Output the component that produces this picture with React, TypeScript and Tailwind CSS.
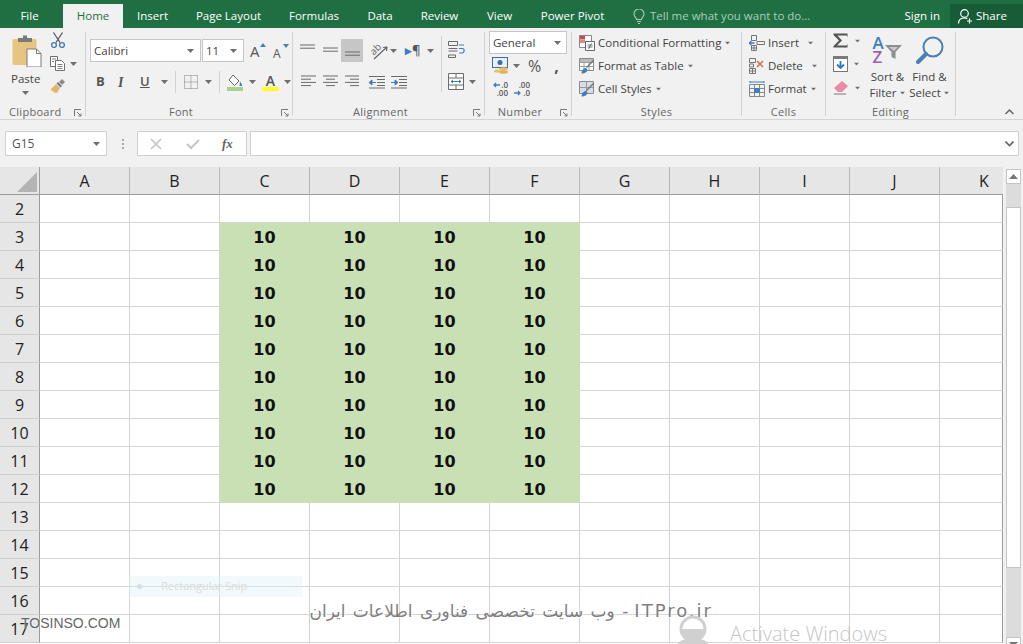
import React from 'react';

const UI = "font-['Open_Sans','Noto_Sans',sans-serif]";
const COLS = ['A', 'B', 'C', 'D', 'E', 'F', 'G', 'H', 'I', 'J', 'K'];
const ROWS = [2, 3, 4, 5, 6, 7, 8, 9, 10, 11, 12, 13, 14, 15, 16, 17];

const TABS = [
  { label: 'File', w: 'w-[59px] mr-[4px]' },
  { label: 'Home', w: 'w-[60px]', active: true },
  { label: 'Insert', w: 'w-[59px]' },
  { label: 'Page Layout', w: 'w-[93px]' },
  { label: 'Formulas', w: 'w-[78px]' },
  { label: 'Data', w: 'w-[54px]' },
  { label: 'Review', w: 'w-[65px]' },
  { label: 'View', w: 'w-[55px]' },
  { label: 'Power Pivot', w: 'w-[91px]' },
];

function Caret({ className = '' }: { className?: string }) {
  return (
    <svg width="7" height="4" viewBox="0 0 7 4" className={`shrink-0 ${className}`}>
      <path d="M0 0h7L3.5 4z" fill="#6f6f6f" />
    </svg>
  );
}

function Launcher() {
  return (
    <svg width="8" height="8" viewBox="0 0 8 8" className="absolute right-[3px] top-[5px]">
      <path d="M0.5 7V0.5H7M3 3l4 4M7 4.5V7H4.5" fill="none" stroke="#777" strokeWidth="1" />
    </svg>
  );
}

function Lines({ widths, color = '#6a6a6a', size = 15, align = 'left' }: { widths: number[]; color?: string; size?: number; align?: 'left' | 'center' | 'right' }) {
  return (
    <svg width={size} height={widths.length * 3.2 + 1} className="shrink-0">
      {widths.map((w, i) => {
        const x = align === 'left' ? 0 : align === 'center' ? (size - w) / 2 : size - w;
        return <rect key={i} x={x} y={i * 3.2 + 0.5} width={w} height="1" fill={color} />;
      })}
    </svg>
  );
}

function PasteIcon() {
  return (
    <svg width="30" height="32" viewBox="0 0 30 32">
      <rect x="0.5" y="4" width="24" height="26" rx="1" fill="#e8c482" />
      <path d="M6 7V3h5V0.5h4V3h5v4z" fill="#7a7a7a" />
      <path d="M15 14h9.5l4.5 4.5V32H15z" fill="#fff" stroke="#7b7b7b" />
      <path d="M24.5 14v4.5H29" fill="none" stroke="#7b7b7b" />
    </svg>
  );
}

function ScissorsIcon() {
  return (
    <svg width="16" height="16" viewBox="0 0 16 16" fill="none">
      <path d="M3.5 0.5l6.5 10M12.5 0.5L6 10.5" stroke="#5a5a5a" strokeWidth="1.3" />
      <circle cx="4" cy="13" r="2.4" stroke="#4a7db5" strokeWidth="1.4" />
      <circle cx="12" cy="13" r="2.4" stroke="#4a7db5" strokeWidth="1.4" />
    </svg>
  );
}

function CopyIcon() {
  return (
    <svg width="15" height="15" viewBox="0 0 15 15" fill="#fff" stroke="#6f6f6f">
      <path d="M0.5 0.5h7v10h-7z" />
      <path d="M5.5 4.5h6l3 3v7h-9z" />
      <path d="M2 3h4M2 5.5h2M7.5 8.5h5M7.5 10.5h5M7.5 12.5h5" strokeWidth="0.9" />
    </svg>
  );
}

function PainterIcon() {
  return (
    <svg width="16" height="15" viewBox="0 0 16 15">
      <path d="M1 10l5-5 4 4-3 5-3-.5-1-1.500-2-.5z" fill="#e3b566" />
      <path d="M6.500 4.500l4 4 1.500-1.500-4-4z" fill="#777" />
      <path d="M9 3l3-3 3 3-3 3z" fill="#8d8d8d" />
    </svg>
  );
}

function BigA({ up }: { up?: boolean }) {
  return (
    <span className="relative flex h-[16px] w-[14px] items-end text-[#555]">
      <span className={up ? 'text-[15px] leading-[15px]' : 'text-[12px] leading-[13px]'}>A</span>
      <svg width="6" height="4" viewBox="0 0 6 4" className="absolute right-[-2px] top-0">
        <path d={up ? 'M0 4h6L3 0z' : 'M0 0h6L3 4z'} fill="#3f7fbf" />
      </svg>
    </span>
  );
}

function BordersIcon() {
  return (
    <svg width="14" height="14" viewBox="0 0 14 14" fill="none" stroke="#7f7f7f" strokeDasharray="1 1">
      <path d="M0.500 0.500h13v13h-13zM7 0.500v13M0.500 7h13" />
    </svg>
  );
}

function FillIcon() {
  return (
    <svg width="17" height="17" viewBox="0 0 17 17">
      <path d="M6 1l6 6-4.500 4.500-5.500-5.500z" fill="#fff" stroke="#666" />
      <path d="M13 7.500l2 3v1.500h-2.500z" fill="#3f7fbf" />
      <rect x="0" y="13" width="16" height="4" fill="#a9d08e" />
    </svg>
  );
}

function FontColorIcon() {
  return (
    <span className="relative flex h-[18px] w-[17px] justify-center">
      <span className="text-[14px] font-semibold leading-[15px] text-[#555]">A</span>
      <span className="absolute bottom-0 h-[4px] w-[17px] rounded-[1px] bg-[#ffff20]" />
    </span>
  );
}

function OrientIcon() {
  return (
    <span className="relative flex h-[18px] w-[19px] shrink-0">
      <span className="ml-[1px] mt-[-1px] -rotate-45 text-[10px] leading-[14px] text-[#666]">ab</span>
      <svg width="19" height="18" viewBox="0 0 19 18" fill="none" className="absolute left-0 top-0">
        <path d="M4 17L17 5M17 5l-4 0.500M17 5l-0.500 4" stroke="#666" strokeWidth="1.2" />
      </svg>
    </span>
  );
}

function WrapIcon() {
  return (
    <svg width="18" height="17" viewBox="0 0 18 17" fill="none" stroke="#6a6a6a">
      <path d="M0.500 0.500h9v4h-9zM0.500 7.500h9M0.500 10h9M0.500 14h7v2.500h-7z" />
      <path d="M11 4h5M11 12h3c2.500 0 3-4 0.500-4.500H11" stroke="#3f7fbf" strokeWidth="1.200" />
    </svg>
  );
}

function MergeIcon() {
  return (
    <svg width="16" height="17" viewBox="0 0 16 17" fill="#fff" stroke="#6a6a6a">
      <path d="M0.500 0.500h15v16h-15zM0.500 5h15M0.500 12h15M8 0.500V5M8 12v4.500" />
      <path d="M3 8.500h10M3 8.500l2-1.500M3 8.500l2 1.500M13 8.500l-2-1.500M13 8.500l-2 1.500" stroke="#3f7fbf" />
    </svg>
  );
}

function IndentIcon({ flip }: { flip?: boolean }) {
  return (
    <svg width="16" height="14" viewBox="0 0 16 14" fill="none">
      <path d="M0 1.500h16M8 4.500h8M8 7.500h8M8 10.500h8M0 13h16" stroke="#6a6a6a" />
      <path d={flip ? 'M0 7.500h4V5l3 2.500L4 10V7.500' : 'M7 7.500H3V5L0 7.500 3 10V7.500'} fill="#3f7fbf" stroke="#3f7fbf" />
    </svg>
  );
}

function AccountingIcon() {
  return (
    <svg width="17" height="19" viewBox="0 0 17 19">
      <rect x="0.500" y="0.500" width="15" height="10" fill="#e9f0f8" stroke="#3a6ea5" />
      <circle cx="8" cy="5.500" r="2.500" fill="#3a6ea5" />
      <ellipse cx="11.500" cy="12" rx="4.500" ry="1.800" fill="#e8c064" />
      <ellipse cx="11.500" cy="15" rx="4.500" ry="1.800" fill="#e3b44e" />
      <ellipse cx="5" cy="14" rx="3" ry="1.500" fill="#e8c064" />
    </svg>
  );
}

function DecimalIcon({ more }: { more?: boolean }) {
  return (
    <span className="relative block h-[16px] w-[16px] text-[8px] font-semibold leading-[8px] text-[#555]">
      <span className="absolute right-0 top-0">{more ? '.00' : '.0'}</span>
      <span className="absolute bottom-0 right-0">{more ? '.0' : '.00'}</span>
      <svg width="8" height="6" viewBox="0 0 8 6" className={more ? 'absolute bottom-[1px] left-0' : 'absolute left-0 top-[1px]'}>
        <path d={more ? 'M0 3h6M4 1l2 2-2 2' : 'M8 3H2M4 1L2 3l2 2'} fill="none" stroke="#3f7fbf" strokeWidth="1.300" />
      </svg>
    </span>
  );
}

function CondFormatIcon() {
  return (
    <svg width="16" height="16" viewBox="0 0 16 16">
      <path d="M0.500 0.500h12v12h-12z" fill="#fff" stroke="#888" />
      <rect x="1" y="1" width="5" height="3.500" fill="#c0504d" />
      <rect x="1" y="5" width="5" height="3" fill="#d98a88" />
      <path d="M6.500 6.500h9v9h-9z" fill="#fff" stroke="#666" />
      <path d="M8.500 10h5M8.500 12h5M12.500 8.500l-3 5.500" stroke="#555" strokeWidth="0.800" />
    </svg>
  );
}

function TableStyleIcon({ fillCells }: { fillCells?: boolean }) {
  return (
    <svg width="16" height="16" viewBox="0 0 16 16">
      <path d="M0.500 0.500h14v12h-14z" fill={fillCells ? '#d7dee8' : '#fff'} stroke="#8a8a8a" />
      {!fillCells && <path d="M0.500 4.500h14M0.500 8.500h14M5 0.500v12M10 0.500v12" stroke="#9a9a9a" />}
      {!fillCells && <rect x="1" y="1" width="13" height="3" fill="#b9b9b9" />}
      {fillCells && <path d="M0.500 6.500h14M7.500 0.500v12" stroke="#9a9a9a" />}
      <path d="M15 3L8 10l-1-1 7-7z" fill="#777" />
      <path d="M2.500 15.500c0-3 2-5.500 4.500-5.500l1.500 1.500c0 2.500-3 4-6 4z" fill="#3f7fbf" />
    </svg>
  );
}

function InsertCellsIcon() {
  return (
    <svg width="16" height="16" viewBox="0 0 16 16" fill="none" stroke="#777">
      <path d="M2.500 0.500h5v5h-5zM2.500 10.500h5v5h-5zM2.500 13h5M5 10.500v5M8 6.500h7.500v3H8z" />
      <path d="M0 8h5.500M0 8l2.500-2M0 8l2.500 2" stroke="#3f7fbf" strokeWidth="1.300" />
    </svg>
  );
}

function DeleteCellsIcon() {
  return (
    <svg width="16" height="16" viewBox="0 0 16 16" fill="none" stroke="#777">
      <path d="M0.500 0.500h6v4h-6zM0.500 10.500h6v5h-6zM0.500 13h6M3.500 10.500v5M0.500 6h4v3h-4z" />
      <path d="M8 3l6 6M14 3L8 9" stroke="#d9694d" strokeWidth="1.500" />
    </svg>
  );
}

function FormatCellsIcon() {
  return (
    <svg width="16" height="16" viewBox="0 0 16 16" fill="none" stroke="#888">
      <path d="M0.500 3.500h15v12h-15zM0.500 7.500h15M0.500 11.500h15M5.500 3.500v12M10.500 3.500v12" />
      <rect x="5" y="7" width="6" height="5" fill="#3f7fbf" stroke="none" />
      <path d="M1 1h14M1 0v2M15 0v2" stroke="#3f7fbf" />
    </svg>
  );
}

function SigmaIcon() {
  return (
    <svg width="15" height="15" viewBox="0 0 15 15">
      <path d="M0.500 0.500h14v3.500l-1-1.500H4.500L9 7.500 4 12.500h9.500l1-1.500v3.500H0.500v-1.500L6 7.500 0.500 2z" fill="#555" />
    </svg>
  );
}

function FillDownIcon() {
  return (
    <svg width="15" height="16" viewBox="0 0 15 16">
      <rect x="0.500" y="0.500" width="14" height="15" fill="#fff" stroke="#777" />
      <rect x="0" y="0" width="15" height="3" fill="#7a7a7a" />
      <path d="M7.500 5v7M4 8.500l3.500 3.500L11 8.500" fill="none" stroke="#2f77bc" strokeWidth="1.800" />
    </svg>
  );
}

function EraserIcon() {
  return (
    <svg width="16" height="15" viewBox="0 0 16 15">
      <path d="M9 1l6 5-6 6H5L1 8z" fill="#e98ba6" />
      <path d="M1 14h12" stroke="#777" strokeWidth="1" />
    </svg>
  );
}

function SortIcon() {
  return (
    <span className="relative flex h-[28px] w-[30px] flex-col text-[17px] font-semibold leading-[14px]">
      <span className="text-[#3f7fbf]">A</span>
      <span className="text-[#a25cb5]">Z</span>
      <svg width="30" height="28" viewBox="0 0 30 28" className="absolute left-0 top-0">
        <path d="M12 9h17l-6.500 7v7l-4-2v-5z" fill="#8e8e8e" />
        <path d="M16 11h9l-4 4z" fill="#c9c9c9" />
      </svg>
    </span>
  );
}

function FindIcon() {
  return (
    <svg width="28" height="28" viewBox="0 0 28 28" fill="none">
      <circle cx="17" cy="11" r="9.500" stroke="#4a7fb5" strokeWidth="2" />
      <path d="M10 18L2 26" stroke="#4a7fb5" strokeWidth="4" strokeLinecap="round" />
    </svg>
  );
}

function Group({ width, label, launcher, labelClass = 'justify-center', children }: { width: string; label: string; launcher?: boolean; labelClass?: string; children: React.ReactNode }) {
  return (
    <div className={`mt-[4px] flex h-[84px] shrink-0 flex-col border-r border-[#d2d2d2] ${width}`}>
      <div className="h-[72px] shrink-0">{children}</div>
      <div className={`relative flex h-[16px] shrink-0 items-center text-[11px] tracking-[0.3px] text-[#666] ${labelClass}`}>
        {label}
        {launcher && <Launcher />}
      </div>
    </div>
  );
}

function StyleRow({ icon, label, caret = true }: { icon: React.ReactNode; label: string; caret?: boolean }) {
  return (
    <div className="flex h-[23px] items-center">
      <span className="flex w-[19px] shrink-0 items-center">{icon}</span>
      <span className="whitespace-nowrap text-[11.500px] text-[#444]">{label}</span>
      {caret && <Caret className="ml-[3px] scale-75" />}
    </div>
  );
}

function Ribbon() {
  return (
    <div className="flex h-[92px] border-b border-[#d4d4d4] bg-[#f1f1f1]">
      <Group width="w-[86px]" label="Clipboard" launcher labelClass="justify-start pl-[9px]">
        <div className="flex">
          <div className="ml-[12px] mt-[3px] flex w-[38px] shrink-0 flex-col">
            <PasteIcon />
            <span className="ml-[-1px] mt-[4px] text-[11.500px] leading-[16px] text-[#444]">Paste</span>
            <Caret className="ml-[10px] mt-[4px]" />
          </div>
          <div className="flex flex-col">
            <ScissorsIcon />
            <div className="mt-[8px] flex items-center">
              <CopyIcon />
              <Caret className="ml-[5px]" />
            </div>
            <div className="mt-[8px]"><PainterIcon /></div>
          </div>
        </div>
      </Group>

      <Group width="w-[207px]" label="Font" launcher labelClass="justify-center pr-[16px]">
        <div className="ml-[4px] mt-[7px] flex items-center">
          <div className="flex h-[23px] w-[111px] items-center justify-between border border-[#c6c6c6] bg-white pl-[3px] pr-[6px] text-[11.500px] text-[#444]">
            Calibri <Caret />
          </div>
          <div className="ml-[1px] flex h-[23px] w-[42px] items-center justify-between border border-[#c6c6c6] bg-white pl-[3px] pr-[6px] text-[11.500px] text-[#444]">
            11 <Caret />
          </div>
          <span className="ml-[6px]"><BigA up /></span>
          <span className="ml-[9px] mt-[2px]"><BigA /></span>
        </div>
        <div className="ml-[10px] mt-[9px] flex h-[22px] items-center text-[13px] text-[#555]">
          <span className="w-[22px] font-bold">B</span>
          <span className="w-[22px] font-['Liberation_Serif',serif] text-[14px] font-semibold italic">I</span>
          <span className="w-[21px] font-semibold underline">U</span>
          <Caret />
          <span className="ml-[7px] mr-[8px] h-[22px] w-px bg-[#d2d2d2]" />
          <BordersIcon />
          <Caret className="ml-[7px]" />
          <span className="ml-[7px] mr-[7px] h-[22px] w-px bg-[#d2d2d2]" />
          <FillIcon />
          <Caret className="ml-[5px]" />
          <span className="ml-[6px]"><FontColorIcon /></span>
          <Caret className="ml-[5px]" />
        </div>
      </Group>

      <Group width="w-[192px]" label="Alignment" launcher labelClass="justify-center pr-[16px]">
        <div className="flex">
          <div className="ml-[7px] flex w-[141px] shrink-0 flex-col">
            <div className="mt-[7px] flex h-[23px] items-center">
              <span className="mb-[6px] flex w-[23px]"><Lines widths={[15, 15]} /></span>
              <span className="flex w-[18px]"><Lines widths={[15, 15]} /></span>
              <span className="flex h-[23px] w-[22px] items-end justify-center bg-[#c6c6c6] pb-[4px]"><Lines widths={[15, 15]} /></span>
              <span className="ml-[7px] flex items-center"><OrientIcon /></span>
              <Caret className="ml-[1px]" />
              <span className="ml-[8px] text-[13px] font-semibold leading-none text-[#555]"><span className="text-[#3f7fbf]">▸</span>¶</span>
              <Caret className="ml-[6px]" />
            </div>
            <div className="mt-[9px] flex h-[22px] items-center">
              <span className="ml-[1px] flex w-[22px]"><Lines widths={[15, 10, 15, 10]} /></span>
              <span className="flex w-[22px]"><Lines widths={[15, 9, 15, 9]} align="center" /></span>
              <span className="flex w-[24px]"><Lines widths={[14, 9, 14, 9]} align="right" size={14} /></span>
              <span className="flex w-[22px]"><IndentIcon /></span>
              <IndentIcon flip />
            </div>
          </div>
          <div className="mt-[4px] h-[56px] w-px shrink-0 bg-[#d2d2d2]" />
          <div className="ml-[6px] flex flex-col">
            <div className="mt-[9px]"><WrapIcon /></div>
            <div className="mt-[15px] flex items-center">
              <MergeIcon />
              <Caret className="ml-[5px]" />
            </div>
          </div>
        </div>
      </Group>

      <Group width="w-[87px]" label="Number" launcher labelClass="justify-center pr-[16px]">
        <div className="ml-[4px] mt-[-1px] flex h-[23px] w-[78px] items-center justify-between border border-[#c6c6c6] bg-white pl-[3px] pr-[5px] text-[11.500px] text-[#444]">
          General <Caret />
        </div>
        <div className="ml-[7px] mt-[1px] flex h-[22px] items-center">
          <AccountingIcon />
          <Caret className="ml-[4px]" />
          <span className="ml-[8px] text-[16px] leading-none text-[#555]">%</span>
          <span className="ml-[13px] text-[16px] font-bold leading-none text-[#555]">,</span>
        </div>
        <div className="ml-[7px] mt-[1px] flex h-[22px] items-center">
          <DecimalIcon />
          <span className="ml-[6px]"><DecimalIcon more /></span>
        </div>
      </Group>

      <Group width="w-[170px]" label="Styles">
        <div className="ml-[7px] mt-[-1px]">
          <StyleRow icon={<CondFormatIcon />} label="Conditional Formatting" />
          <StyleRow icon={<TableStyleIcon />} label="Format as Table" />
          <StyleRow icon={<TableStyleIcon fillCells />} label="Cell Styles" />
        </div>
      </Group>

      <Group width="w-[84px]" label="Cells">
        <div className="ml-[7px] mt-[-1px]">
          <div className="flex w-[65px] items-center justify-between"><StyleRow icon={<InsertCellsIcon />} label="Insert" caret={false} /><Caret className="scale-75" /></div>
          <div className="flex w-[69px] items-center justify-between"><StyleRow icon={<DeleteCellsIcon />} label="Delete" caret={false} /><Caret className="scale-75" /></div>
          <StyleRow icon={<FormatCellsIcon />} label="Format" />
        </div>
      </Group>

      <Group width="w-[130px]" label="Editing">
        <div className="flex">
          <div className="ml-[7px] flex w-[33px] shrink-0 flex-col">
            <div className="mt-[1px] flex items-center"><SigmaIcon /><Caret className="ml-[6px] scale-75" /></div>
            <div className="mt-[8px] flex items-center"><FillDownIcon /><Caret className="ml-[5px] scale-75" /></div>
            <div className="mt-[8px] flex items-center"><EraserIcon /><Caret className="ml-[5px] scale-75" /></div>
          </div>
          <div className="flex w-[43px] shrink-0 flex-col items-center text-[11.500px] leading-[16px] text-[#444]">
            <div className="mt-[4px] h-[32px]"><SortIcon /></div>
            <span className="mt-[1px]">Sort &amp;</span>
            <span className="flex items-center">Filter<Caret className="ml-[2px] scale-75" /></span>
          </div>
          <div className="ml-[-1px] flex w-[43px] shrink-0 flex-col items-center text-[11.500px] leading-[16px] text-[#444]">
            <div className="mt-[4px] h-[32px]"><FindIcon /></div>
            <span className="mt-[1px]">Find &amp;</span>
            <span className="flex items-center">Select<Caret className="ml-[2px] scale-75" /></span>
          </div>
        </div>
      </Group>

      <div className="flex flex-1 items-end justify-end pb-[4px] pr-[9px]">
        <svg width="9" height="6" viewBox="0 0 9 6" fill="none"><path d="M0.500 5l4-4 4 4" stroke="#666" strokeWidth="1.500" /></svg>
      </div>
    </div>
  );
}

function FormulaBar() {
  return (
    <div className="flex h-[47px] items-start bg-[#f1f1f1] pl-[5px] pt-[11px] text-[#555]">
      <div className="flex h-[25px] w-[102px] items-center justify-between border border-[#d0d0d0] bg-white pl-[6px] pr-[6px] text-[12px]">
        G15 <Caret />
      </div>
      <div className="ml-[15px] mr-[14px] flex h-[25px] w-px flex-col items-center justify-center gap-[2px]">
        <span className="h-[2px] w-[2px] shrink-0 bg-[#a8a8a8]" />
        <span className="h-[2px] w-[2px] shrink-0 bg-[#a8a8a8]" />
        <span className="h-[2px] w-[2px] shrink-0 bg-[#a8a8a8]" />
      </div>
      <div className="flex h-[25px] w-[110px] items-center border border-[#d0d0d0] bg-white">
        <svg width="12" height="12" viewBox="0 0 12 12" className="ml-[12px]"><path d="M1 1l10 10M11 1L1 11" stroke="#c4c4c4" strokeWidth="1.600" /></svg>
        <svg width="14" height="12" viewBox="0 0 14 12" className="ml-[24px]"><path d="M1 6l4 4 8-8" fill="none" stroke="#c4c4c4" strokeWidth="2" /></svg>
        <span className="ml-[22px] font-['Liberation_Serif',serif] text-[13px] font-bold italic text-[#666]">fx</span>
      </div>
      <div className="ml-[3px] flex h-[25px] w-[769px] items-center justify-end border border-[#d0d0d0] bg-white pr-[4px]">
        <svg width="9" height="6" viewBox="0 0 9 6" fill="none"><path d="M0.500 0.500l4 4 4-4" stroke="#666" strokeWidth="1.600" /></svg>
      </div>
    </div>
  );
}

function Sheet() {
  return (
    <div className="flex">
      <div className="w-[1003px] shrink-0 font-['Open_Sans',sans-serif]">
        <div className="flex h-[28px]">
          <div className="relative w-[40px] shrink-0 border-b border-r border-[#9c9c9c] bg-[#e6e6e6]">
            <svg width="20" height="20" viewBox="0 0 20 20" className="absolute left-[17px] top-[5px]"><path d="M0 20L20 0v20z" fill="#b4b4b4" /></svg>
          </div>
          {COLS.map((c) => (
            <div key={c} className={`flex shrink-0 items-center border-b border-[#9c9c9c] bg-[#e6e6e6] text-[16px] text-[#222] ${c === 'K' ? 'w-[63px] justify-start pl-[39px]' : 'w-[90px] justify-center border-r border-r-[#b9b9b9]'}`}>
              {c}
            </div>
          ))}
        </div>
        {ROWS.map((r) => {
          const filled = r >= 3 && r <= 12;
          return (
            <div key={r} className="flex h-[28px]">
              <div className="flex w-[40px] shrink-0 items-center justify-center border-b border-r border-b-[#cfcfcf] border-r-[#9c9c9c] bg-[#e6e6e6] text-[16px] text-[#222]">
                {r}
              </div>
              {COLS.map((c) => {
                const green = filled && ['C', 'D', 'E', 'F'].includes(c);
                const last = c === 'K';
                return (
                  <div
                    key={c}
                    className={`flex shrink-0 items-center justify-center pt-[2px] font-['DejaVu_Sans',sans-serif] text-[16px] font-bold text-[#111] ${last ? 'w-[63px] border-r-[#9c9c9c]' : 'w-[90px]'} ${green ? 'border-b border-r border-[#c9dfb4] bg-[#c9dfb4]' : 'border-b border-r border-b-[#d4d4d4] bg-white'} ${!green && !last ? 'border-r-[#d4d4d4]' : ''}`}
                  >
                    {green ? '10' : ''}
                  </div>
                );
              })}
            </div>
          );
        })}
      </div>
      <div className="flex h-[485px] w-[20px] shrink-0 flex-col items-center bg-[#f1f1f1] pt-[2px]">
        <div className="flex h-[15px] w-[15px] shrink-0 items-center justify-center border border-[#c4c4c4] bg-white">
          <svg width="9" height="5" viewBox="0 0 9 5"><path d="M0 5h9L4.500 0z" fill="#777" /></svg>
        </div>
        <div className="flex w-[15px] flex-1 flex-col bg-[#dcdcdc]">
          <div className="mt-[23px] h-[361px] border border-[#c4c4c4] bg-white" />
        </div>
        <div className="flex h-[15px] w-[15px] shrink-0 items-center justify-center border border-[#c4c4c4] bg-white">
          <svg width="9" height="5" viewBox="0 0 9 5"><path d="M0 0h9L4.500 5z" fill="#777" /></svg>
        </div>
      </div>
    </div>
  );
}

export default function App() {
  return (
    <div className={`relative h-[644px] w-[1023px] overflow-hidden bg-white ${UI}`}>
      <div className="flex h-[28px] items-end bg-[#1f6f43] text-[11.500px] text-white">
        {TABS.map((t) => (
          <div
            key={t.label}
            className={`flex shrink-0 items-center justify-center ${t.w} ${t.active ? 'h-[24px] bg-[#f1f1f1] text-[#1f6f43]' : 'h-[24px]'}`}
          >
            {t.label}
          </div>
        ))}
        <div className="ml-[15px] flex h-[24px] items-center text-[#a6cfb8]">
          <svg width="12" height="15" viewBox="0 0 12 15" fill="none" stroke="#a6cfb8" strokeWidth="1.100">
            <path d="M3.500 10.500C3 8 1 7.500 1 5a5 5 0 0110 0c0 2.500-2 3-2.500 5.500zM4 12.500h4M5 14.500h2" />
          </svg>
          <span className="ml-[5px] whitespace-nowrap">Tell me what you want to do...</span>
        </div>
        <div className="flex-1" />
        <div className="flex h-[24px] items-center pr-[10px]">Sign in</div>
        <div className="flex h-[24px] w-[73px] items-center bg-[#185c37] pl-[8px]">
          <svg width="15" height="15" viewBox="0 0 15 15" fill="none" stroke="#fff" strokeWidth="1.200">
            <circle cx="6.500" cy="4.500" r="3.800" />
            <path d="M0.500 14.500c0-3.500 2.500-5.500 6-5.500 1 0 2 .2 2.800.6M11.500 9.500v5M9 12h5" />
          </svg>
          <span className="ml-[3px]">Share</span>
        </div>
      </div>
      <Ribbon />
      <FormulaBar />
      <Sheet />

      {/* things burnt into the screenshot */}
      <div className="absolute left-[129px] top-[576px] flex h-[21px] w-[173px] items-center bg-[#dff0fa]/40 text-[11px] text-[#dcdcdc]">
        <span className="ml-[8px] h-[5px] w-[5px] rounded-full bg-[#d6dfe6]" />
        <span className="ml-[19px]">Rectangular Snip</span>
      </div>
      <div className="absolute left-[21px] top-[614px] font-['Liberation_Sans',sans-serif] text-[14px] leading-[18px] text-[#666] [text-shadow:0_0_2px_#fff]">
        TOSINSO.COM
      </div>
      <div dir="rtl" className="absolute left-[300px] top-[599px] flex w-[413px] items-center gap-[6px] whitespace-nowrap font-['DejaVu_Sans',sans-serif] leading-[24px] text-[#808080] [text-shadow:1px_1px_0_#fff]">
        <span dir="ltr" className="text-[18px] tracking-[2px]">ITPro.ir</span>
        <span className="text-[17px] [word-spacing:2px]">- وب سایت تخصصی فناوری اطلاعات ایران</span>
      </div>
      <svg width="36" height="30" viewBox="0 0 36 30" className="absolute left-[675px] top-[615px]">
        <circle cx="18" cy="14" r="12" fill="#fff" stroke="#d0d0d0" strokeWidth="3" />
        <path d="M7 14a11 11 0 0022 0z" fill="#d0d0d0" />
        <path d="M2 30c2-5 7-6 16-6s14 1 16 6z" fill="#d0d0d0" />
      </svg>
      <div className="absolute left-[730px] top-[621px] font-['Open_Sans',sans-serif] text-[20px] font-light leading-[26px] text-[#c6c6c6]">
        Activate Windows
      </div>
    </div>
  );
}
